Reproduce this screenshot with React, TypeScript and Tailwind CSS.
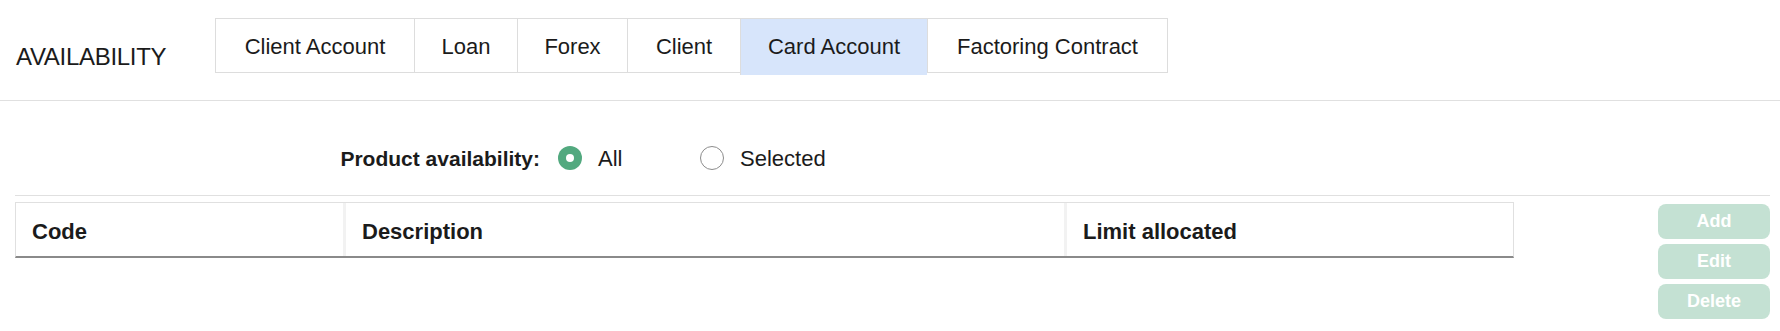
import { useState } from "react";

const tabs = [
  { label: "Client Account", width: "w-[199px]" },
  { label: "Loan", width: "w-[103px]" },
  { label: "Forex", width: "w-[110px]" },
  { label: "Client", width: "w-[113px]" },
  { label: "Card Account", width: "w-[187px]" },
  { label: "Factoring Contract", width: "w-[241px]" },
];

const columns = [
  { label: "Code", className: "" },
  { label: "Description", className: "border-l-[3px] border-[#f2f2f2]" },
  { label: "Limit allocated", className: "border-l-[3px] border-[#f2f2f2]" },
];

function Radio({ checked, label, onClick }: { checked: boolean; label: string; onClick: () => void }) {
  return (
    <button type="button" onClick={onClick} className="flex w-[142px] items-center gap-4">
      {checked ? (
        <span className="flex h-6 w-6 items-center justify-center rounded-full bg-[#52a97f]">
          <span className="h-2 w-2 rounded-full bg-white" />
        </span>
      ) : (
        <span className="h-6 w-6 rounded-full border border-[#8c8c8c] bg-white" />
      )}
      <span className="text-[22px] leading-[25px]">{label}</span>
    </button>
  );
}

export default function App() {
  const [activeTab, setActiveTab] = useState("Card Account");
  const [availability, setAvailability] = useState("All");

  return (
    <div className="min-h-screen bg-white font-['Liberation_Sans',Arial,sans-serif] text-[#1b1b1b]">
      {/* Header with tabs */}
      <div className="flex h-[101px] items-start border-b border-[#e0e0e0] pl-4 pt-[18px]">
        <h1 className="mt-[25px] w-[199px] text-[24px] leading-[27px] tracking-[-0.3px]">AVAILABILITY</h1>
        <div className="flex items-start">
          {tabs.map((tab, i) => {
            const active = tab.label === activeTab;
            return (
              <button
                key={tab.label}
                type="button"
                onClick={() => setActiveTab(tab.label)}
                className={`${tab.width} flex items-center justify-center border-l border-t border-[#dddddd] text-[22px] leading-[25px] ${
                  active ? "h-[57px] bg-[#d7e5fb] pb-[1px]" : "h-[55px] border-b pt-[2px]"
                } ${i === tabs.length - 1 ? "border-r" : ""}`}
              >
                {tab.label}
              </button>
            );
          })}
        </div>
      </div>

      <div className="ml-[15px] mr-[10px]">
        {/* Product availability */}
        <div className="flex h-[95px] items-start border-b border-[#e0e0e0] pt-[37px]">
          <div className="flex h-[40px] items-center">
            <span className="w-[543px] pr-[18px] text-right text-[21px] font-bold leading-[25px]">
              Product availability:
            </span>
            <Radio checked={availability === "All"} label="All" onClick={() => setAvailability("All")} />
            <Radio checked={availability === "Selected"} label="Selected" onClick={() => setAvailability("Selected")} />
          </div>
        </div>

        {/* Table and actions */}
        <div className="mt-[6px] flex items-start justify-between">
          <div className="w-[1499px] border-x border-t border-b-2 border-[#e0e0e0] border-b-[#8a8a8a]">
            <div className="grid h-[53px] grid-cols-[327px_721px_1fr]">
              {columns.map((col) => (
                <div key={col.label} className={`flex items-center pl-4 pt-[4px] text-[22px] font-bold ${col.className}`}>
                  {col.label}
                </div>
              ))}
            </div>
          </div>

          <div className="flex w-[112px] flex-col gap-[5px] pt-[2px]">
            {["Add", "Edit", "Delete"].map((b) => (
              <button
                key={b}
                type="button"
                disabled
                className="h-[35px] rounded-lg bg-[#c4e1d3] text-[18px] font-bold text-white"
              >
                {b}
              </button>
            ))}
          </div>
        </div>
      </div>
    </div>
  );
}
